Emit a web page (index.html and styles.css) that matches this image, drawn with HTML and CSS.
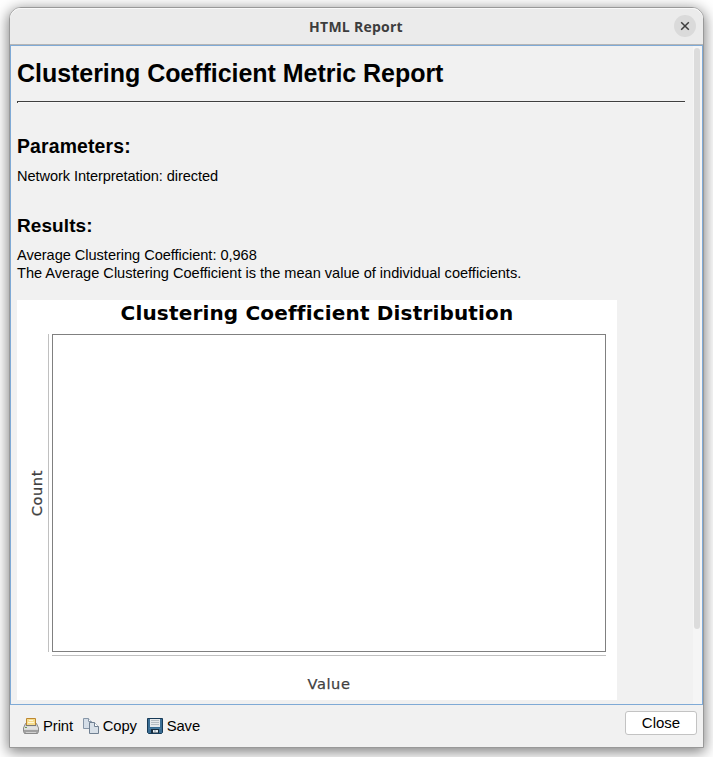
FILE: index.html
```
<!DOCTYPE html>
<html lang="en">
<head>
<meta charset="utf-8">
<title>HTML Report</title>
<link rel="stylesheet" href="styles.css">
</head>
<body>
<div class="window">
  <header class="titlebar">
    <span class="title">HTML Report</span>
    <button class="close-x" aria-label="Close window"><svg width="22" height="22" viewBox="0 0 22 22"><path d="M7.2 7.2l7.6 7.6M14.8 7.2l-7.6 7.6" stroke="#3d3d3d" stroke-width="1.5"/></svg></button>
  </header>
  <main class="pane">
    <article class="report">
      <h1>Clustering Coefficient Metric Report</h1>
      <div class="rule"></div>
      <h2 class="parameters">Parameters:</h2>
      <p class="network">Network Interpretation: directed</p>
      <h2 class="results">Results:</h2>
      <p class="average">Average Clustering Coefficient: 0,968</p>
      <p class="note">The Average Clustering Coefficient is the mean value of individual coefficients.</p>
      <figure class="chart">
        <figcaption>Clustering Coefficient Distribution</figcaption>
        <div class="plot-row">
          <div class="y-label"><span>Count</span></div>
          <div class="y-axis"></div>
          <div class="plot"></div>
        </div>
        <div class="x-axis"></div>
        <div class="x-label">Value</div>
      </figure>
    </article>
    <div class="scroll"><div class="thumb"></div></div>
  </main>
  <footer class="toolbar">
    <button class="tool"><svg width="16" height="16" viewBox="0 0 16 16">
      <defs><linearGradient id="pg" x2="0" y2="1"><stop offset="0" stop-color="#c4c4c4"/><stop offset=".5" stop-color="#e8e8e8"/><stop offset="1" stop-color="#999"/></linearGradient></defs>
      <path d="M2.500 5.500h11l2 4.500v3.500l-1 2h-13l-1-2V10z" fill="url(#pg)" stroke="#8a8a8a"/>
      <path d="M3.500 7.500V.5h9v7z" fill="#f6dc8c" stroke="#bd8730"/>
      <path d="M6 2.500h4M5 4.500h6" stroke="#fff6d8"/>
      <path d="M3 7.500h10" stroke="#777"/><path d="M1 10.500h14" stroke="#e0e0e0"/>
      <path d="M1 12h14v2H1z" fill="#a0a0a0"/><path d="M3 14.500h10" stroke="#d0d0d0"/><path d="M2 9.500h2" stroke="#6c9c55"/>
    </svg><span>Print</span></button>
    <button class="tool"><svg width="16" height="16" viewBox="0 0 16 16">
      <path d="M.5.5h5l3 3v7h-8z" fill="#d5dee8" stroke="#8796a8"/><path d="M5.500.5v3h3" fill="#fff" stroke="#8796a8"/>
      <path d="M6.500 4.500h5l4 4v7h-9z" fill="#d8e0e8" stroke="#708092"/><path d="M11.500 4.500v4h4" fill="#fff" stroke="#708092"/>
    </svg><span>Copy</span></button>
    <button class="tool"><svg width="16" height="16" viewBox="0 0 16 16">
      <path d="M.5.5h15v14l-1 1h-13l-1-1z" fill="#396d94" stroke="#173a57"/>
      <path d="M3 1h10v8H3z" fill="#e6e9eb"/><path d="M4 2.500h8M4 4.500h8M4 6.500h8" stroke="#b5bcc1"/>
      <path d="M2 10h12v1H2z" fill="#4a7c9f"/><path d="M4 11h8v4H4z" fill="#172c3d"/><path d="M6 12h5v2.500H6z" fill="#e8edf0"/><path d="M7 12h2v2H7z" fill="#b5c2cc"/>
    </svg><span>Save</span></button>
    <button class="close-btn">Close</button>
  </footer>
</div>
</body>
</html>
```
FILE: styles.css
```
* { box-sizing: border-box; }
html, body { height: 100%; }
body {
  margin: 0;
  padding: 7px 9px 9px;
  overflow: hidden;
  background: #fff;
  color: #000;
  font-family: "Liberation Sans", Arial, sans-serif;
}
button { border: 0; padding: 0; background: none; color: inherit; font: inherit; letter-spacing: inherit; }
svg { display: block; flex: none; }
.window {
  width: 695px;
  height: 741px;
  display: flex;
  flex-direction: column;
  border: 1px solid #999;
  border-radius: 12px 12px 0 0;
  background: #f1f1f1;
  box-shadow: 0 3px 14px 1px rgba(0, 0, 0, .5);
}
.titlebar {
  height: 37px;
  flex: none;
  display: grid;
  grid-template-columns: 1fr auto 1fr;
  align-items: center;
  padding: 0 7px 1px 6px;
  border-radius: 11px 11px 0 0;
  border-bottom: 1px solid #b5b5b5;
  background: #ebebeb;
  box-shadow: inset 0 1px #f9f9f9;
}
.title {
  grid-column: 2;
  padding-top: 1px;
  color: #3d3d3d;
  font: bold 14px "Open Sans", "Noto Sans", sans-serif;
  letter-spacing: .25px;
}
.close-x {
  justify-self: end;
  width: 22px;
  height: 22px;
  border-radius: 50%;
  background: #dadada;
}
.pane {
  height: 660px;
  flex: none;
  display: flex;
  border: 1px solid #7faad6;
  overflow: hidden;
}
.report { width: 682px; padding: 0 6px; flex: none; }
h1 { margin: 13px 0 0; font-size: 25px; line-height: 28px; letter-spacing: -.04px; }
.rule {
  width: 668px;
  height: 2px;
  margin-top: 14px;
  border-top: 1px solid #404040;
  border-left: 1px solid #404040;
  background: #f8f8f8;
}
h2 { margin: 33px 0 0; font-size: 19px; line-height: 22px; }
.parameters { margin-top: 32px; padding-bottom: 1px; font-size: 19.4px; letter-spacing: .15px; }
.results { margin-top: 30px; letter-spacing: .08px; }
p { margin: 9px 0 0; font-size: 14.6px; line-height: 18px; white-space: nowrap; }
.network { letter-spacing: -.08px; }
.average { letter-spacing: -.04px; }
.note { margin-top: 0; letter-spacing: -.015px; }
.chart {
  width: 600px;
  height: 400px;
  margin: 18px 0 0;
  background: #fff;
  font-family: "DejaVu Sans", sans-serif;
}
figcaption {
  height: 34px;
  padding-top: 1px;
  text-align: center;
  font-size: 20px;
  font-weight: bold;
  line-height: 24px;
  letter-spacing: .17px;
}
.plot-row { display: flex; height: 318px; }
.y-label { width: 31px; flex: none; display: flex; align-items: center; justify-content: flex-end; padding-right: 3px; }
.y-label span,
.x-label {
  color: #404040;
  font-size: 14.6px;
  letter-spacing: .6px;
  -webkit-text-stroke: .25px #404040;
}
.y-label span { writing-mode: vertical-rl; transform: rotate(180deg); line-height: 16px; }
.y-axis { width: 1px; margin-right: 3px; background: #c0c0c0; }
.plot { width: 554px; border: 1px solid #808080; }
.x-axis { width: 554px; height: 1px; margin: 3px 0 0 35px; background: #c0c0c0; }
.x-label { margin: 19px 0 0 24px; text-align: center; line-height: 17px; }
.scroll { flex: 1; padding: 2px 2px 0 1px; background: #f5f5f5; }
.thumb { width: 6px; height: 581px; border-radius: 3px; background: #dcdcdc; }
.toolbar {
  flex: 1;
  display: flex;
  padding: 5px 6px 0 13px;
  gap: 9.7px;
  align-items: flex-start;
  font-size: 14.8px;
  letter-spacing: -.08px;
}
.tool { display: flex; align-items: center; gap: 4px; height: 16px; margin-top: 8px; line-height: 16px; }
.close-btn {
  width: 72px;
  height: 24px;
  margin: 1px 0 0 auto;
  padding-bottom: 2px;
  border: 1px solid #c3c3c3;
  border-radius: 3px;
  background: #fff;
  font-size: 15px;
  letter-spacing: 0;
}
```
